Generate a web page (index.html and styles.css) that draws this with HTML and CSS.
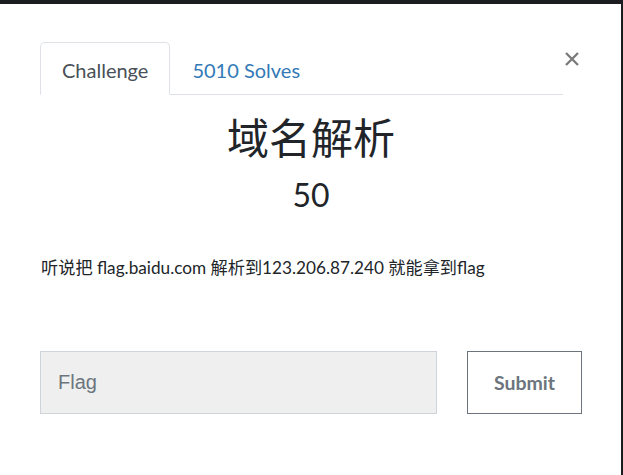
FILE: index.html
```html
<!DOCTYPE html>
<html lang="zh">
<head>
<meta charset="utf-8">
<title>域名解析</title>
<link rel="stylesheet" href="styles.css">
</head>
<body>
<div class="modal">
  <div class="header">
    <ul class="tabs">
      <li class="tab active">Challenge</li>
      <li class="tab link">5010 Solves</li>
    </ul>
    <button class="close" aria-label="Close">
      <svg width="16" height="16" viewBox="0 0 16 16"><path d="M2 2 L14 14 M14 2 L2 14" stroke="#7a7a7a" stroke-width="2.3" fill="none"/></svg>
    </button>
  </div>
  <div class="body">
    <h2 class="title">域名解析</h2>
    <div class="value">50</div>
    <p class="desc">听说把 flag.baidu.com 解析到123.206.87.240 就能拿到flag</p>
    <div class="form">
      <input class="flag" type="text" placeholder="Flag">
      <button class="submit">Submit</button>
    </div>
  </div>
</div>
</body>
</html>
```
FILE: styles.css
```css
html, body {
  margin: 0;
  padding: 0;
  background: #1b1d21;
  height: 100%;
  overflow: hidden;
}
.modal {
  margin-top: 4px;
  margin-right: 2px;
  height: 471px;
  background: #fff;
  padding: 38px 41px 0 40px;
  box-sizing: border-box;
  font-family: Lato, "Noto Sans CJK SC", sans-serif;
  color: #212529;
}
.header {
  display: flex;
  align-items: flex-start;
}
.tabs {
  list-style: none;
  margin: 0;
  padding: 0;
  display: flex;
  width: 525px;
  border-bottom: 1px solid #dee2e6;
}
.tab {
  font-size: 20px;
  line-height: 24px;
  padding: 15px 21px 12px;
  border: 1px solid transparent;
  border-radius: 5px 5px 0 0;
  margin-bottom: -1px;
}
.tab.active {
  color: #495057;
  border-color: #dee2e6 #dee2e6 #fff;
  background: #fff;
}
.tab.link {
  color: #337ab7;
}
.close {
  margin: 9px 0 0 1px;
  padding: 0;
  border: 0;
  background: none;
  width: 16px;
  height: 16px;
  display: flex;
}
.body {
  width: 542px;
}
.title {
  margin: 18px 0 0;
  text-align: center;
  font-size: 42px;
  font-weight: 400;
  line-height: 50px;
}
.value {
  text-align: center;
  font-size: 32px;
  line-height: 40px;
  margin-top: 12px;
}
.desc {
  margin: 41px 0 0 1px;
  font-size: 17.2px;
  line-height: 24px;
  color: #212529;
}
.form {
  display: flex;
  gap: 30px;
  margin-top: 71px;
}
.flag {
  width: 397px;
  height: 63px;
  box-sizing: border-box;
  background: #efefef;
  border: 1px solid #ced4da;
  padding: 0 17px;
  font-family: "Liberation Sans", Arial, sans-serif;
  font-size: 20px;
  color: #495057;
  outline: none;
}
.flag::placeholder {
  color: #6c757d;
}
.submit {
  width: 115px;
  height: 63px;
  box-sizing: border-box;
  background: #fff;
  border: 1px solid #6c757d;
  color: #6c757d;
  font-family: Lato, sans-serif;
  font-weight: 700;
  font-size: 19.5px;
  padding: 0;
}
```
